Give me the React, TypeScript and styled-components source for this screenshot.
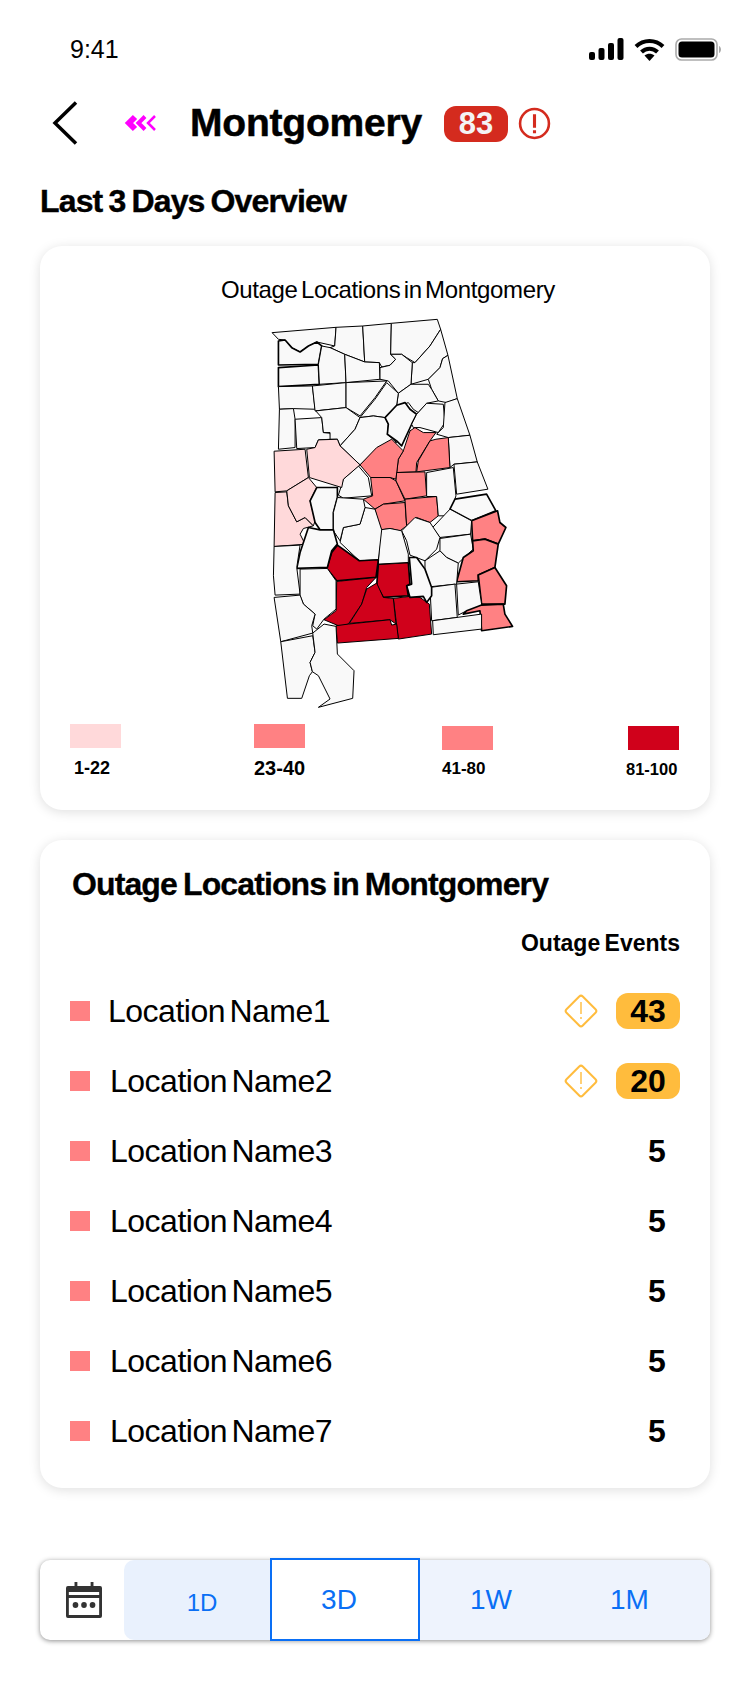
import React from "react";
import styled, { createGlobalStyle } from "styled-components";

const GlobalStyle = createGlobalStyle`
  html, body {
    margin: 0;
    padding: 0;
    background: #fff;
    font-family: "Liberation Sans", Arial, sans-serif;
    color: #000;
  }
`;

const PINK_LIGHT = "#ffd9da";
const PINK = "#ff8183";
const RED = "#d0011b";
const EMPTY = "#f9f9f9";

type County = { fill: string; heavy?: boolean; d: string };

// points are in 3x map units, traced from the reference
const counties: County[] = [
  { fill: EMPTY, d: "66,100 258,84 254,140 200,128 175,140 150,158 125,145 105,122 85,120" },
  { fill: EMPTY, d: "258,84 338,80 344,188 284,165 240,145 254,140" },
  { fill: EMPTY, d: "338,80 424,72 422,165 437,180 420,198 395,203 388,190 344,188" },
  { fill: EMPTY, d: "424,72 562,60 572,90 540,140 495,190 470,175 455,165 422,165" },
  { fill: EMPTY, d: "572,90 594,168 578,178 570,205 535,240 483,255 487,190 495,190 540,140" },
  { fill: EMPTY, heavy: true, d: "85,125 105,122 125,145 150,158 175,140 200,128 215,140 205,195 85,197" },
  { fill: EMPTY, heavy: true, d: "85,205 205,197 208,255 85,262" },
  { fill: EMPTY, d: "215,140 240,145 284,165 288,250 208,255 205,195" },
  { fill: EMPTY, d: "284,165 344,188 388,190 390,240 288,250" },
  { fill: EMPTY, d: "390,205 420,198 437,180 422,165 455,165 487,190 483,255 445,282 415,245 390,240" },
  { fill: EMPTY, d: "594,168 622,298 590,310 565,305 545,270 535,240 570,205 578,178" },
  { fill: EMPTY, d: "483,255 535,255 545,270 565,305 530,312 505,340 490,330 475,310 450,320 440,318 445,282" },
  { fill: EMPTY, d: "85,262 187,260 195,330 130,328 88,330" },
  { fill: EMPTY, d: "187,260 288,250 288,325 195,335" },
  { fill: EMPTY, d: "288,250 410,245 375,295 330,350 288,325" },
  { fill: EMPTY, d: "410,250 445,282 440,318 405,355 370,350 330,355 375,300" },
  { fill: EMPTY, d: "88,330 130,328 135,360 135,445 85,450" },
  { fill: EMPTY, d: "135,360 215,355 220,400 240,402 245,420 205,422 195,445 140,448" },
  { fill: EMPTY, d: "197,335 288,325 330,355 315,390 270,440 262,420 240,420 240,400 220,400 215,355" },
  { fill: EMPTY, d: "330,355 370,350 405,355 415,375 412,405 440,430 415,435 380,450 330,497 270,440 315,390" },
  { fill: EMPTY, heavy: true, d: "405,355 440,318 465,310 480,330 500,345 485,375 455,440 440,425 412,405 415,375" },
  { fill: EMPTY, d: "500,345 530,312 580,315 585,370 565,400 510,385 490,385 485,375" },
  { fill: EMPTY, d: "585,310 622,298 660,408 595,415 560,405 580,385" },
  { fill: EMPTY, d: "595,415 660,408 682,488 612,495 600,505" },
  { fill: PINK, d: "480,395 495,385 520,400 558,400 540,425 500,490 498,518 440,520 445,480 460,455" },
  { fill: PINK, d: "595,415 600,505 500,518 505,485 540,425 558,420" },
  { fill: PINK, d: "330,497 380,445 425,420 460,455 445,480 438,540 420,535 362,535" },
  { fill: EMPTY, d: "280,540 325,500 355,535 365,590 280,597 265,588" },
  { fill: PINK_LIGHT, d: "72,456 165,450 175,535 110,575 75,578" },
  { fill: PINK_LIGHT, d: "170,450 195,445 205,422 262,420 270,440 330,497 280,540 275,565 178,535" },
  { fill: PINK_LIGHT, d: "72,742 75,580 110,578 115,620 140,668 165,655 190,680 160,688 150,705 160,725 170,735" },
  { fill: PINK_LIGHT, d: "110,575 175,535 200,565 180,605 195,665 190,680 165,655 140,668 115,620" },
  { fill: EMPTY, heavy: true, d: "200,565 262,565 262,595 250,640 250,692 210,692 195,670 180,605" },
  { fill: PINK, d: "362,535 420,535 438,545 465,605 400,615 375,630 340,600 368,590" },
  { fill: PINK, d: "440,520 525,518 530,590 465,600 438,545" },
  { fill: PINK, d: "375,630 400,615 465,610 470,680 450,695 420,688 395,692 385,675" },
  { fill: PINK, d: "465,600 560,592 565,650 540,670 500,655 470,680" },
  { fill: EMPTY, d: "530,520 610,505 618,590 610,615 590,650 565,650 560,592 530,592" },
  { fill: EMPTY, d: "612,495 682,488 714,570 620,585" },
  { fill: EMPTY, heavy: true, d: "615,600 710,585 738,635 665,665 600,630" },
  { fill: PINK, heavy: true, d: "665,665 743,635 750,670 768,685 745,735 705,720 668,725" },
  { fill: EMPTY, d: "600,630 665,665 662,705 570,715 548,685" },
  { fill: EMPTY, d: "455,695 495,655 540,670 570,715 560,750 525,785 480,768 470,725" },
  { fill: EMPTY, d: "570,718 662,705 670,750 625,792 590,775 570,755" },
  { fill: PINK, heavy: true, d: "668,725 705,720 745,735 735,805 685,828 685,845 620,848 640,775 670,755" },
  { fill: EMPTY, d: "525,785 570,755 590,775 625,792 620,855 540,863 525,810" },
  { fill: PINK, heavy: true, d: "685,828 735,805 770,860 765,915 695,915" },
  { fill: EMPTY, d: "620,855 685,848 695,915 695,935 650,935 625,948" },
  { fill: EMPTY, d: "540,865 615,855 622,955 545,965" },
  { fill: PINK, heavy: true, d: "695,918 760,915 765,945 788,982 695,995 690,935 640,945 650,935" },
  { fill: EMPTY, d: "548,965 695,945 695,990 550,1007" },
  { fill: RED, d: "430,898 478,892 510,895 538,915 545,1005 445,1020" },
  { fill: EMPTY, heavy: true, d: "478,775 500,775 525,810 545,865 545,890 530,910 520,892 480,895 470,860 485,855" },
  { fill: RED, heavy: true, d: "385,795 475,790 480,855 470,860 475,890 400,895 380,860" },
  { fill: EMPTY, d: "390,692 420,688 455,695 475,765 475,790 385,795" },
  { fill: EMPTY, d: "280,685 330,675 345,625 375,630 395,692 385,782 328,785 270,730" },
  { fill: EMPTY, d: "262,595 340,600 345,625 330,675 280,685 270,725 250,695 250,640" },
  { fill: RED, heavy: true, d: "262,738 328,785 385,782 378,835 260,845 230,808 245,760" },
  { fill: RED, d: "260,847 378,835 350,865 335,915 295,975 270,982 222,962 258,935" },
  { fill: RED, d: "380,852 400,895 430,898 438,975 420,962 298,973 335,915 350,870" },
  { fill: RED, d: "258,980 295,975 420,962 425,978 440,975 445,1018 262,1032" },
  { fill: EMPTY, heavy: true, d: "175,685 210,692 250,692 262,735 245,755 232,805 140,808 150,760" },
  { fill: EMPTY, d: "72,742 150,738 140,805 150,885 75,888 70,830" },
  { fill: EMPTY, d: "150,810 232,808 258,845 258,930 222,960 200,990 188,980 195,945 160,915 150,890" },
  { fill: EMPTY, d: "72,895 150,888 160,915 195,945 185,980 188,1002 92,1028" },
  { fill: EMPTY, d: "92,1028 188,1010 195,1060 180,1090 187,1118 178,1130 155,1198 112,1198" },
  { fill: EMPTY, d: "188,1002 222,975 258,982 262,1065 312,1115 308,1198 205,1225 240,1200 205,1130 187,1118 180,1090 195,1060" },
];

const Page = styled.div`
  width: 750px;
  height: 1696px;
  overflow: hidden;
  padding: 0 40px;
  box-sizing: border-box;
  background: #fff;
`;

const StatusBar = styled.div`
  display: flex;
  align-items: center;
  justify-content: space-between;
  height: 30px;
  padding: 34px 0 0 30px;
  margin-right: -11px;
`;

const Clock = styled.span`
  font-size: 25px;
  line-height: 30px;
`;

const StatusIcons = styled.div`
  display: flex;
  align-items: center;
  gap: 10px;
`;

const Header = styled.div`
  display: flex;
  align-items: center;
  height: 44px;
  margin-top: 37px;
  padding-left: 12px;
`;

const BackIcon = styled.svg`
  width: 26px;
  height: 44px;
  flex: none;
`;

const Chevrons = styled.svg`
  width: 34px;
  height: 18px;
  flex: none;
  margin-left: 45px;
`;

const CityName = styled.h1`
  margin: 0 0 0 33px;
  font-size: 39px;
  line-height: 44px;
  font-weight: 700;
  letter-spacing: -0.2px;
  -webkit-text-stroke: 0.5px #000;
`;

const ScoreBadge = styled.span`
  margin: 1px 0 0 22px;
  width: 64px;
  height: 36px;
  border-radius: 12px;
  background: #d42b1e;
  color: #f4f4f4;
  font-size: 31px;
  line-height: 36px;
  font-weight: 700;
  text-align: center;
`;

const AlertIcon = styled.svg`
  width: 33px;
  height: 33px;
  margin-left: 10px;
`;

const SectionTitle = styled.h2`
  margin: 38px 0 0;
  font-size: 32px;
  line-height: 36px;
  font-weight: 700;
  letter-spacing: -0.85px;
  word-spacing: -2px;
  -webkit-text-stroke: 0.4px #000;
`;

const Card = styled.section<{ $height: number }>`
  height: ${({ $height }) => $height}px;
  box-sizing: border-box;
  border-radius: 22px;
  background: #fff;
  box-shadow: 0 2px 12px rgba(0, 0, 0, 0.13);
`;

const MapCard = styled(Card)`
  margin-top: 27px;
  padding: 29px 32px 0 30px;
`;

const MapTitle = styled.div`
  font-size: 24px;
  line-height: 30px;
  text-align: center;
  letter-spacing: -0.35px;
  word-spacing: -3px;
  margin-left: 28px;
`;

const MapSvg = styled.svg`
  display: block;
  width: 245px;
  height: 393px;
  margin: 11px 0 0 200px;
`;

const Legend = styled.div`
  display: grid;
  grid-template-columns: 184px 188px 186px 51px;
  margin-top: 15px;
`;

const LegendItem = styled.div<{ $drop?: boolean }>`
  display: flex;
  flex-direction: column;
  margin-top: ${({ $drop }) => ($drop ? 2 : 0)}px;
`;

const Swatch = styled.div<{ $color: string }>`
  width: 51px;
  height: 24px;
  background: ${({ $color }) => $color};
`;

const LegendLabel = styled.div<{ $size: number; $shift?: number }>`
  margin-top: ${({ $size }) => ($size < 18 ? 9 : 10)}px;
  margin-left: ${({ $shift }) => $shift ?? 0}px;
  font-size: ${({ $size }) => $size}px;
  line-height: 20px;
  font-weight: 700;
  white-space: nowrap;
`;

const ListCard = styled(Card)`
  margin-top: 30px;
  padding: 25px 30px 0 30px;
`;

const ListTitle = styled.h3`
  margin: 0;
  font-size: 32px;
  line-height: 38px;
  font-weight: 700;
  letter-spacing: -0.88px;
  word-spacing: -2px;
  padding-left: 2px;
  -webkit-text-stroke: 0.3px #000;
`;

const ColumnHead = styled.div`
  margin-top: 27px;
  text-align: right;
  font-size: 23px;
  line-height: 26px;
  font-weight: 700;
  letter-spacing: 0;
  word-spacing: -2px;
`;

const LocationList = styled.ul`
  list-style: none;
  margin: 20px 0 0;
  padding: 0;
`;

const LocationRow = styled.li`
  display: flex;
  align-items: center;
  height: 70px;
`;

const LocationMark = styled.span`
  width: 20px;
  height: 20px;
  background: ${PINK};
  flex: none;
`;

const LocationName = styled.span<{ $tight?: boolean }>`
  flex: 1;
  margin-left: ${({ $tight }) => ($tight ? 18 : 20)}px;
  font-size: 32px;
  line-height: 40px;
  letter-spacing: -0.5px;
  word-spacing: -4px;
`;

const WarnIcon = styled.svg`
  width: 36px;
  height: 36px;
  margin-right: 17px;
`;

const CountBadge = styled.span`
  width: 64px;
  height: 36px;
  border-radius: 12px;
  background: #ffbc3d;
  font-size: 32px;
  line-height: 36px;
  font-weight: 700;
  text-align: center;
`;

const PlainCount = styled.span`
  width: 46px;
  font-size: 32px;
  line-height: 36px;
  font-weight: 700;
  text-align: center;
`;

const RangeBar = styled.div`
  display: flex;
  height: 80px;
  margin-top: 72px;
  border-radius: 10px;
  background: #fff;
  box-shadow: 0 1px 5px rgba(0, 0, 0, 0.45);
`;

const CalendarCell = styled.div`
  display: flex;
  align-items: center;
  justify-content: center;
  width: 84px;
  padding-left: 4px;
  box-sizing: border-box;
  flex: none;
`;

const RangeCell = styled.div<{
  $selected?: boolean;
  $width: number;
  $tint: string;
  $small?: boolean;
  $first?: boolean;
  $last?: boolean;
}>`
  display: flex;
  align-items: center;
  justify-content: center;
  box-sizing: border-box;
  width: ${({ $width }) => $width}px;
  flex: none;
  padding-top: ${({ $small }) => ($small ? 6 : 0)}px;
  padding-left: ${({ $small }) => ($small ? 13 : 0)}px;
  padding-right: ${({ $last, $selected }) => ($last ? 16 : $selected ? 12 : 3)}px;
  font-size: ${({ $small }) => ($small ? 24 : 28)}px;
  color: #0a6ff5;
  background: ${({ $tint }) => $tint};
  border-radius: ${({ $first, $last }) => ($first ? "10px 0 0 10px" : $last ? "0 10px 10px 0" : "0")};
  ${({ $selected }) =>
    $selected ? `border: 2px solid #0a6ff5; height: 83px; margin-top: -2px; position: relative;` : ""}
`;

const rows = [
  { name: "Location Name1", count: 43, warn: true, tight: true },
  { name: "Location Name2", count: 20, warn: true },
  { name: "Location Name3", count: 5 },
  { name: "Location Name4", count: 5 },
  { name: "Location Name5", count: 5 },
  { name: "Location Name6", count: 5 },
  { name: "Location Name7", count: 5 },
];

const Warn = () => (
  <WarnIcon viewBox="0 0 36 36" fill="none" stroke="#ffbc3d">
    <rect x="6.5" y="6.5" width="23" height="23" rx="2.5" strokeWidth="2" transform="rotate(45 18 18)" />
    <path d="M18 9v12M18 24v2" strokeWidth="1.4" />
  </WarnIcon>
);

export default function App() {
  return (
    <Page>
      <GlobalStyle />
      <StatusBar>
        <Clock>9:41</Clock>
        <StatusIcons>
          <svg width="35" height="22" viewBox="0 0 35 22" fill="#000">
            <rect x="0" y="14" width="6" height="8" rx="2" />
            <rect x="9.500" y="10" width="6" height="12" rx="2" />
            <rect x="19" y="5" width="6" height="17" rx="2" />
            <rect x="28.500" y="0" width="6" height="22" rx="2" />
          </svg>
          <svg width="31" height="23" viewBox="0 0 31 23" fill="none" stroke="#000" strokeWidth="4">
            <path d="M2 8.500C9.500 1 21.500 1 29 8.500" />
            <path d="M7.500 14C12 9.500 19 9.500 23.500 14" />
            <path d="M15.500 23l-5-5.500c3-2.500 7-2.500 10 0z" fill="#000" stroke="none" />
          </svg>
          <svg width="46" height="23" viewBox="0 0 46 23" fill="none">
            <rect x="1" y="1" width="41" height="21" rx="5.500" stroke="#aaa" strokeWidth="1.600" />
            <rect x="3.500" y="3.500" width="36" height="16" rx="3.500" fill="#000" />
            <path d="M44 8v7c1.300-.6 2-2 2-3.500S45.300 8.600 44 8z" fill="#aaa" />
          </svg>
        </StatusIcons>
      </StatusBar>

      <Header>
        <BackIcon viewBox="0 0 26 44" fill="none" stroke="#000" strokeWidth="3.500">
          <path d="M24 1.500L3 22l21 20.500" />
        </BackIcon>
        <Chevrons viewBox="0 0 34 18" fill="none" stroke="#f0f">
          <path d="M12 3L6 9l6 6" strokeWidth="6" />
          <path d="M22 2.500L15.500 9l6.500 6.500" strokeWidth="4" />
          <path d="M32 2L25 9l7 7" strokeWidth="2.500" />
        </Chevrons>
        <CityName>Montgomery</CityName>
        <ScoreBadge>83</ScoreBadge>
        <AlertIcon viewBox="0 0 32 32" fill="none" stroke="#d42b1e">
          <circle cx="16" cy="16" r="14" strokeWidth="2.500" />
          <path d="M16 7v13M16 22.500v3" strokeWidth="3" />
        </AlertIcon>
      </Header>

      <SectionTitle>Last 3 Days Overview</SectionTitle>

      <MapCard $height={564}>
        <MapTitle>Outage Locations in Montgomery</MapTitle>
        <MapSvg viewBox="60 50 735 1180">
          {counties.map((county, i) => (
            <polygon
              key={i}
              points={county.d}
              fill={county.fill}
              stroke="#000"
              strokeWidth={county.heavy ? 5 : 3}
              strokeLinejoin="round"
            />
          ))}
        </MapSvg>
        <Legend>
          <LegendItem>
            <Swatch $color={PINK_LIGHT} />
            <LegendLabel $size={18} $shift={4}>1-22</LegendLabel>
          </LegendItem>
          <LegendItem>
            <Swatch $color={PINK} />
            <LegendLabel $size={20}>23-40</LegendLabel>
          </LegendItem>
          <LegendItem $drop>
            <Swatch $color={PINK} />
            <LegendLabel $size={17}>41-80</LegendLabel>
          </LegendItem>
          <LegendItem $drop>
            <Swatch $color={RED} />
            <LegendLabel $size={16.5} $shift={-2}>81-100</LegendLabel>
          </LegendItem>
        </Legend>
      </MapCard>

      <ListCard $height={648}>
        <ListTitle>Outage Locations in Montgomery</ListTitle>
        <ColumnHead>Outage Events</ColumnHead>
        <LocationList>
          {rows.map((row) => (
            <LocationRow key={row.name}>
              <LocationMark />
              <LocationName $tight={row.tight}>{row.name}</LocationName>
              {row.warn ? (
                <>
                  <Warn />
                  <CountBadge>{row.count}</CountBadge>
                </>
              ) : (
                <PlainCount>{row.count}</PlainCount>
              )}
            </LocationRow>
          ))}
        </LocationList>
      </ListCard>

      <RangeBar>
        <CalendarCell>
          <svg width="36" height="36" viewBox="0 0 38 36" fill="#333" preserveAspectRatio="none">
            <path d="M9 0h3v5H9zM26 0h3v5h-3z" />
            <path fillRule="evenodd" d="M2 4h34a2 2 0 0 1 2 2v28a2 2 0 0 1-2 2H2a2 2 0 0 1-2-2V6a2 2 0 0 1 2-2zm1 6v3h32v-3zm0 6v17h32V16z" />
            <circle cx="10" cy="23" r="3" />
            <circle cx="19" cy="23" r="3" />
            <circle cx="28" cy="23" r="3" />
          </svg>
        </CalendarCell>
        <RangeCell $width={146} $tint="#e9f1fd" $small $first>1D</RangeCell>
        <RangeCell $width={150} $tint="#fff" $selected>3D</RangeCell>
        <RangeCell $width={145} $tint="#eef3fd">1W</RangeCell>
        <RangeCell $width={145} $tint="#eef3fd" $last>1M</RangeCell>
      </RangeBar>
    </Page>
  );
}
